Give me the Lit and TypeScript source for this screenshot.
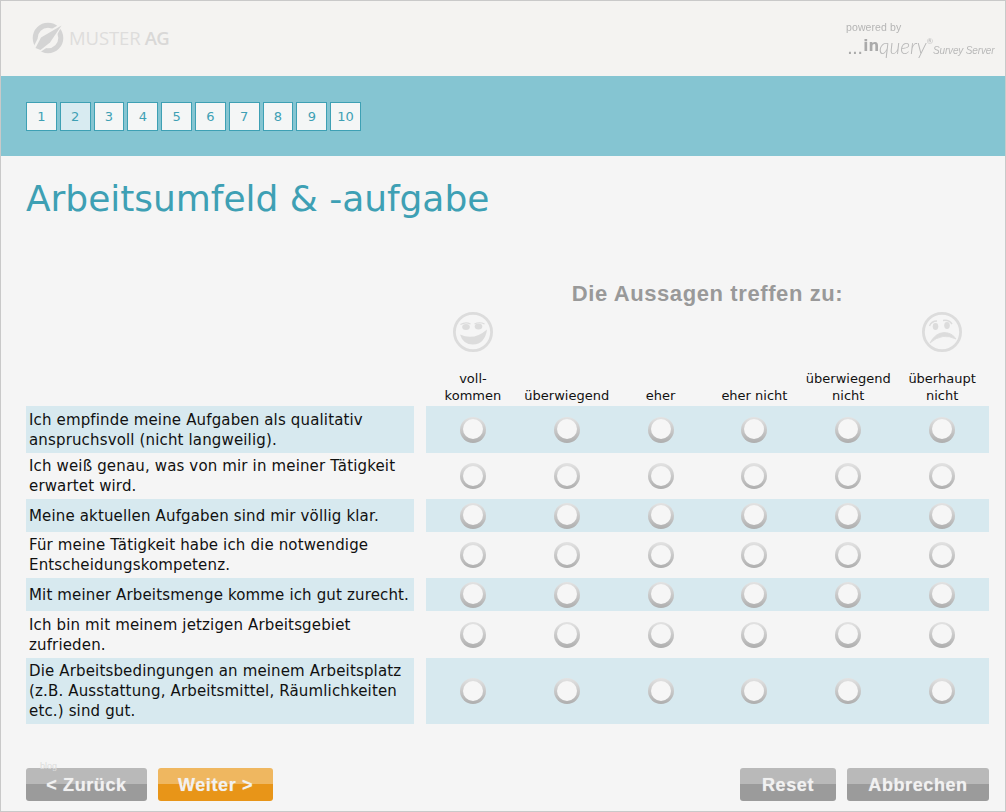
import { LitElement, html, css, svg } from "lit";
import { customElement } from "lit/decorators.js";

const ROWS: [string, number][] = [
  ["Ich empfinde meine Aufgaben als qualitativ anspruchsvoll (nicht langweilig).", 47],
  ["Ich weiß genau, was von mir in meiner Tätigkeit erwartet wird.", 46],
  ["Meine aktuellen Aufgaben sind mir völlig klar.", 33],
  ["Für meine Tätigkeit habe ich die notwendige Entscheidungskompetenz.", 46],
  ["Mit meiner Arbeitsmenge komme ich gut zurecht.", 33],
  ["Ich bin mit meinem jetzigen Arbeitsgebiet zufrieden.", 47],
  ["Die Arbeitsbedingungen an meinem Arbeitsplatz (z.B. Ausstattung, Arbeitsmittel, Räumlichkeiten etc.) sind gut.", 66],
];
const LABELS = [
  html`voll-<br />kommen`,
  html`überwiegend`,
  html`eher`,
  html`eher nicht`,
  html`überwiegend<br />nicht`,
  html`überhaupt<br />nicht`,
];

const happy = svg`<circle cx="21" cy="21" r="18.6" fill="none" stroke="#dcdcdc" stroke-width="2.8"/>
  <ellipse cx="14" cy="16" rx="3.8" ry="3" fill="#dcdcdc"/><ellipse cx="26.5" cy="15.5" rx="3.8" ry="3" fill="#dcdcdc"/>
  <path d="M8.5 13.5 Q13.5 10.5 18.5 13M22.5 13 Q27.5 10.5 32.5 13" fill="none" stroke="#dcdcdc" stroke-width="1.2"/>
  <path d="M8 23.5 Q22 30 35 18.5 Q33 33 21 33.5 Q11 33.5 8 23.5Z" fill="#dcdcdc"/>`;
const sad = svg`<circle cx="21" cy="21" r="18.6" fill="none" stroke="#dcdcdc" stroke-width="2.8"/>
  <ellipse cx="14.5" cy="15.5" rx="2.8" ry="3.4" fill="#dcdcdc"/><ellipse cx="26" cy="14.5" rx="2.8" ry="3.4" fill="#dcdcdc"/>
  <path d="M8.5 15 Q10.5 10 16 10M22 9.5 Q28 8.5 31 13" fill="none" stroke="#dcdcdc" stroke-width="1.4"/>
  <path d="M9 32 Q14 22 23 21.5 Q31 21.5 35 28 Q28 24.8 22 25.5 Q15 26.5 9 32Z" fill="#dcdcdc" stroke="#dcdcdc" stroke-width="0.8"/>`;

@customElement("app-root")
export class AppRoot extends LitElement {
  static styles = css`
    :host {
      display: block;
      box-sizing: border-box;
      width: 1006px;
      height: 812px;
      border: 1px solid #c9c9c9;
      background: #f5f5f5;
      font-family: "DejaVu Sans", sans-serif;
      overflow: hidden;
    }
    .head {
      height: 75px;
      background: #f4f3f1;
      display: flex;
      justify-content: space-between;
      padding: 0 8px 0 31px;
    }
    .logo {
      display: flex;
      align-items: center;
      gap: 5px;
      margin-bottom: 2px;
    }
    .logo-text {
      font: 18.5px "Open Sans", sans-serif;
      color: #dedddc;
      letter-spacing: -0.1px;
      word-spacing: -0.5px;
    }
    .logo-text b {
      font-weight: 600;
      color: #d9d8d7;
      letter-spacing: -0.7px;
    }
    .powered {
      width: 151px;
      padding-top: 20px;
      color: #b5b5b5;
      filter: blur(0.35px);
    }
    .powered-by {
      font: 10.5px/13px "Liberation Sans", sans-serif;
      letter-spacing: 0.1px;
    }
    .brand {
      display: flex;
      align-items: baseline;
      padding-left: 2px;
      margin-top: 2px;
      height: 20px;
      white-space: nowrap;
    }
    .brand-dots {
      font: 700 14px/20px "Liberation Sans", sans-serif;
      letter-spacing: 1.2px;
      color: #aaa;
    }
    .brand-in {
      font: 700 15px/20px "DejaVu Sans", sans-serif;
      color: #aaa;
      position: relative;
      top: -3px;
    }
    .brand-name {
      font: italic 300 21px/20px "Lato", sans-serif;
      color: #b9b9b9;
      letter-spacing: -0.1px;
    }
    .brand-name sup {
      font-size: 8px;
      vertical-align: 10px;
      line-height: 0;
      font-weight: 400;
    }
    .brand-sub {
      font: italic 10px/20px "Liberation Sans", sans-serif;
      color: #b9b9b9;
      letter-spacing: -0.15px;
    }
    .band {
      height: 80px;
      background: #85c5d2;
      padding: 26px 25px 0;
      box-sizing: border-box;
      display: flex;
      gap: 3px;
    }
    .step {
      width: 30.8px;
      height: 29px;
      box-sizing: border-box;
      border: 1px solid #3ea0b4;
      background: #f4f6f6;
      color: #3ea0b4;
      font-size: 13px;
      display: flex;
      align-items: center;
      justify-content: center;
    }
    .step.on {
      background: #d8ebf1;
    }
    h1 {
      margin: 0;
      padding: 22px 0 0 25px;
      height: 85px;
      box-sizing: border-box;
      font-weight: 400;
      font-size: 36px;
      line-height: 42px;
      letter-spacing: -0.04px;
      color: #3ea0b4;
    }
    .survey {
      display: grid;
      grid-template-columns: 388px 563px;
      column-gap: 12px;
      margin-left: 25px;
    }
    .scale-head {
      grid-column: 2;
      height: 165px;
      display: flex;
      flex-direction: column;
    }
    .scale-title {
      font: 700 22px "Liberation Sans", sans-serif;
      color: #999;
      text-align: center;
      height: 29px;
      line-height: 24px;
      letter-spacing: 0.6px;
      margin-top: 41px;
    }
    .faces {
      display: grid;
      grid-template-columns: repeat(6, 1fr);
      height: 43px;
      justify-items: center;
    }
    .faces svg {
      width: 42px;
      height: 42px;
    }
    .faces .last {
      grid-column: 6;
    }
    .labels {
      margin-top: auto;
      display: grid;
      grid-template-columns: repeat(6, 1fr);
      align-items: end;
      text-align: center;
      font-size: 13px;
      line-height: 17px;
      color: #111;
      padding-bottom: 2px;
    }
    .q {
      background: #d7e9ef;
      display: flex;
      align-items: center;
      padding-left: 3px;
      font-size: 15px;
      line-height: 20px;
      letter-spacing: 0.15px;
      color: #111;
    }
    .q.alt,
    .opts.alt {
      background: transparent;
    }
    .opts {
      background: #d7e9ef;
      display: grid;
      grid-template-columns: repeat(6, 1fr);
      align-items: center;
      justify-items: center;
    }
    .radio {
      width: 26px;
      height: 26px;
      box-sizing: border-box;
      border-radius: 50%;
      background: linear-gradient(#e3e3e3, #aeaeae);
      display: flex;
      align-items: center;
      justify-content: center;
      padding-bottom: 1px;
    }
    .radio i {
      width: 20px;
      height: 20px;
      border-radius: 50%;
      background: #f6f6f6;
      display: block;
    }
    .actions {
      display: flex;
      justify-content: space-between;
      margin: 44px 16px 0 25px;
    }
    .group {
      display: flex;
      gap: 11px;
      position: relative;
    }
    .btn {
      height: 33px;
      border-radius: 3px;
      background: linear-gradient(#b9b9b9 50%, #9b9b9b 50%);
      color: #f1f1f1;
      font: 700 18px/34px "Liberation Sans", sans-serif;
      letter-spacing: 0.6px;
      text-align: center;
      text-shadow: 0 0 1px rgba(255, 255, 255, 0.5);
    }
    .btn.go {
      background: linear-gradient(#efb760 50%, #e89518 50%);
    }
    .w121 { width: 121px; }
    .w115 { width: 115px; }
    .w96 { width: 96px; }
    .w142 { width: 142px; }
    .tiny {
      position: absolute;
      left: 14px;
      top: -7px;
      font: 9px "Liberation Sans", sans-serif;
      color: #dcdcdc;
    }
  `;

  render() {
    return html`
      <div class="head">
        <div class="logo">
          <svg width="32" height="32" viewBox="0 0 32 32">
            <circle cx="16" cy="16" r="12.8" fill="none" stroke="#d4d4d4" stroke-width="5" />
            <path d="M32 0 L7 14 L0 28 L7 31 L20 22Z" fill="#f4f3f1" />
            <path d="M29.5 3.5 L9 15.5 L3.5 26 L8.5 28 L18 20.5Z" fill="#d4d4d4" />
          </svg>
          <span class="logo-text">MUSTER <b>AG</b></span>
        </div>
        <div class="powered">
          <div class="powered-by">powered by</div>
          <div class="brand">
            <span class="brand-dots">...</span>
            <span class="brand-in">in</span>
            <span class="brand-name">query<sup>®</sup></span>
            <span class="brand-sub">Survey Server</span>
          </div>
        </div>
      </div>
      <div class="band">
        ${[1, 2, 3, 4, 5, 6, 7, 8, 9, 10].map(
          (n) => html`<div class="step ${n === 2 ? "on" : ""}">${n}</div>`
        )}
      </div>
      <h1>Arbeitsumfeld &amp; -aufgabe</h1>
      <div class="survey">
        <div class="scale-head">
          <div class="scale-title">Die Aussagen treffen zu:</div>
          <div class="faces">
            <svg viewBox="0 0 42 42">${happy}</svg>
            <svg class="last" viewBox="0 0 42 42">${sad}</svg>
          </div>
          <div class="labels">${LABELS.map((l) => html`<div>${l}</div>`)}</div>
        </div>
        ${ROWS.map(
          ([text, h], i) => html`
            <div class="q ${i % 2 ? "alt" : ""}" style="height:${h}px">${text}</div>
            <div class="opts ${i % 2 ? "alt" : ""}" style="height:${h}px">
              ${LABELS.map(() => html`<div class="radio"><i></i></div>`)}
            </div>
          `
        )}
      </div>
      <div class="actions">
        <div class="group">
          <span class="tiny">blog</span>
          <div class="btn w121">&lt; Zurück</div>
          <div class="btn go w115">Weiter &gt;</div>
        </div>
        <div class="group">
          <div class="btn w96">Reset</div>
          <div class="btn w142">Abbrechen</div>
        </div>
      </div>
    `;
  }
}
